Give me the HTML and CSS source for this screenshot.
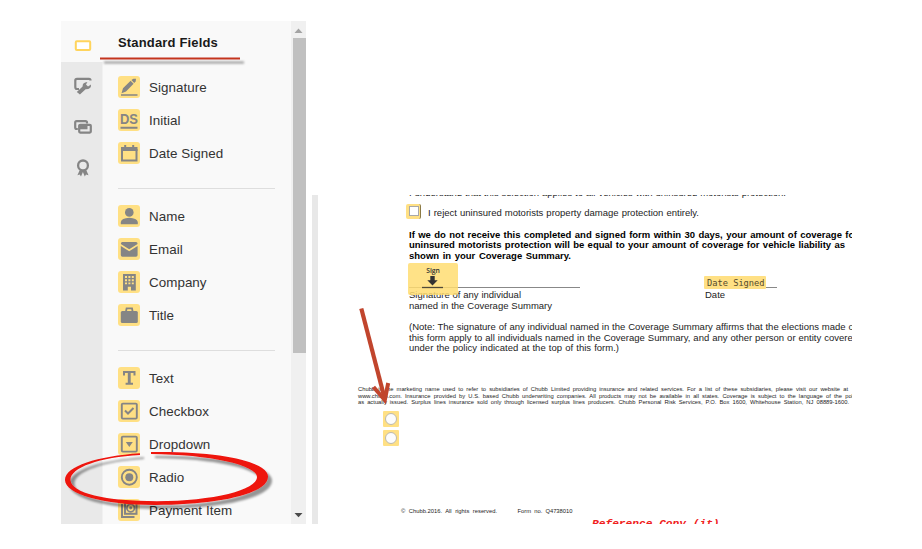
FILE: index.html
```
<!DOCTYPE html>
<html lang="en">
<head>
<meta charset="utf-8">
<title>Standard Fields</title>
<link rel="stylesheet" href="styles.css">
</head>
<body>
<div class="workspace">
  <aside class="palette">
    <nav class="rail">
      <div class="tab active"><svg width="18" height="12" viewBox="0 0 18 12"><rect x="1.8" y="1.3" width="14.4" height="8.7" rx="1" fill="#fff" stroke="#ffd45c" stroke-width="2"/></svg></div>
      <div class="tab"><svg width="18" height="18" viewBox="0 0 18 18"><path d="M5 12H3Q1.3 12 1.3 10V3.4Q1.3 1.8 3 1.8H15Q16.5 1.8 16.5 3.5" fill="none" stroke="#858585" stroke-width="2.2"/><path d="M2.8 15L8.6 9.4Q8.4 5.3 13.4 5L12 7.6L14 9.4L17 7.4Q17.4 12.4 11.6 12.2L5.9 17.6Z" fill="#858585"/></svg></div>
      <div class="tab"><svg width="18" height="14" viewBox="0 0 18 14"><path d="M3.8 9H2.6Q1.2 9 1.2 7.6V2.5Q1.2 1.1 2.6 1.1H11.5Q13 1.1 13 2.5V3.5" fill="none" stroke="#858585" stroke-width="2.2"/><rect x="5.2" y="4.8" width="11.6" height="7.8" rx="1" fill="none" stroke="#858585" stroke-width="2.2"/><path d="M4.7 5.2H13.5V9.3H4.7Z" fill="#858585"/></svg></div>
      <div class="tab"><svg width="14" height="18" viewBox="0 0 14 18"><circle cx="7" cy="6.4" r="4.9" fill="none" stroke="#858585" stroke-width="2.3"/><path d="M4 10.4L1.4 16.2L3.7 15.6L5 17.5L6.9 13L8.8 17.5L10 15.6L12.5 16.2L10 10.4L7 11.6Z" fill="#858585"/></svg></div>
    </nav>
    <div class="fields">
      <h1>Standard Fields</h1>
      <ul>
        <li><svg class="ico" viewBox="0 0 22 22"><path d="M3 19H19.5" stroke="#858585" stroke-width="1.3"/><path d="M3.5 17.2L5 12.2L12.6 4.8L15.6 7.8L8 15.6Z M13.4 4L15.4 2.7L18 2.7L17.7 5.5L16.2 7Z" fill="#858585"/></svg><span>Signature</span></li>
        <li><svg class="ico" viewBox="0 0 22 22"><text x="11" y="15" class="ds" text-anchor="middle" textLength="18" lengthAdjust="spacingAndGlyphs">DS</text><path d="M2.5 18.7H19.5" stroke="#858585" stroke-width="2"/></svg><span>Initial</span></li>
        <li><svg class="ico" viewBox="0 0 22 22"><path d="M4 7V18.5H18.5V7" fill="none" stroke="#858585" stroke-width="2"/><path d="M3 5H19.5V9H3ZM6.2 3H8.2V5H6.2ZM14.2 3H16.2V5H14.2Z" fill="#858585"/></svg><span>Date Signed</span></li>
      </ul>
      <ul>
        <li><svg class="ico" viewBox="0 0 22 22"><circle cx="11.3" cy="7.4" r="4.3" fill="#858585"/><path d="M2.8 19.2V17Q3.5 13.2 11.3 12.8Q19 13.2 19.8 17V19.2Z" fill="#858585"/></svg><span>Name</span></li>
        <li><svg class="ico" viewBox="0 0 22 22"><path d="M4.4 4H18Q19.6 4 19.6 6L11.2 11.2L2.8 6Q2.8 4 4.4 4Z M2.8 8L11.2 13.2L19.6 8V17Q19.6 18.8 18 18.8H4.4Q2.8 18.8 2.8 17Z" fill="#858585"/></svg><span>Email</span></li>
        <li><svg class="ico" viewBox="0 0 22 22"><path d="M5 3H17.8V19.6H13V15.8H9.8V19.6H5Z" fill="#858585"/><path d="M7 6H9M10.4 6H12.4M13.8 6H15.8M7 9.2H9M10.4 9.2H12.4M13.8 9.2H15.8M7 12.4H9M10.4 12.4H12.4M13.8 12.4H15.8" stroke="#ffe084" stroke-width="1.9"/></svg><span>Company</span></li>
        <li><svg class="ico" viewBox="0 0 22 22"><rect x="2.8" y="7" width="17" height="12" rx="1.5" fill="#858585"/><path d="M8 7.5L8.6 4.3H14L14.6 7.5" fill="none" stroke="#858585" stroke-width="1.8"/></svg><span>Title</span></li>
      </ul>
      <ul>
        <li><svg class="ico" viewBox="0 0 22 22"><path d="M5 4H17.5V8.5H15.5V6H12.7V15.8H15V17.8H7.6V15.8H9.8V6H7V8.5H5Z" fill="#858585"/></svg><span>Text</span></li>
        <li><svg class="ico" viewBox="0 0 22 22"><rect x="3.8" y="3.6" width="15" height="15" rx="1" fill="none" stroke="#858585" stroke-width="1.9"/><path d="M7 10.5L10 13.5L15.5 8" fill="none" stroke="#858585" stroke-width="2"/></svg><span>Checkbox</span></li>
        <li><svg class="ico" viewBox="0 0 22 22"><rect x="3.8" y="3.6" width="15" height="15" rx="1" fill="none" stroke="#858585" stroke-width="1.9"/><path d="M7.8 9H14.8L11.3 14Z" fill="#858585"/></svg><span>Dropdown</span></li>
        <li><svg class="ico" viewBox="0 0 22 22"><circle cx="11.3" cy="11.2" r="7.5" fill="none" stroke="#858585" stroke-width="1.9"/><circle cx="11.3" cy="11.2" r="4" fill="#858585"/></svg><span>Radio</span></li>
        <li><svg class="ico" viewBox="0 0 22 22"><path d="M4 5V18H16.5" fill="none" stroke="#858585" stroke-width="2"/><rect x="7" y="3" width="11.5" height="11.8" fill="none" stroke="#858585" stroke-width="2"/><circle cx="12.7" cy="9" r="3.8" fill="none" stroke="#858585" stroke-width="1.8"/><circle cx="12.7" cy="9" r="1.4" fill="#858585"/></svg><span>Payment Item</span></li>
      </ul>
    </div>
    <div class="scrollbar">
      <svg width="9" height="5" viewBox="0 0 9 5"><path d="M0.5 5L4.5 0.5L8.5 5Z" fill="#a3a3a3"/></svg>
      <div class="thumb"></div>
      <svg class="down" width="9" height="5" viewBox="0 0 9 5"><path d="M0.5 0L4.5 4.3L8.5 0Z" fill="#4a4a4a"/></svg>
    </div>
  </aside>
  <main class="document">
    <div class="body-text">
      <p class="line w-understand">I understand that this selection applies to all vehicles with uninsured motorists protection.</p>
      <div class="choice"><span class="box"><i></i></span><p class="line w-reject">I reject uninsured motorists property damage protection entirely.</p></div>
      <div class="strong">
        <p class="line w-b1">If we do not receive this completed and signed form within 30 days, your amount of coverage for</p>
        <p class="line w-b2">uninsured motorists protection will be equal to your amount of coverage for vehicle liability as</p>
        <p class="line w-b3">shown in your Coverage Summary.</p>
      </div>
      <div class="signing">
        <div class="signer">
          <div class="rule"></div>
          <p class="line w-s1">Signature of any individual</p>
          <p class="line w-s2">named in the Coverage Summary</p>
          <div class="sign-tag"><span>Sign</span><svg width="22" height="14" viewBox="0 0 22 14"><path d="M8.3 1H12.7V5.3H15.7L10.5 10.5L5.3 5.3H8.3Z" fill="#333"/><path d="M0 12.5H21" stroke="#504a38" stroke-width="1.3"/></svg></div>
        </div>
        <div class="dater">
          <div class="rule"></div>
          <p class="line w-date">Date</p>
          <div class="date-tag">Date Signed</div>
        </div>
      </div>
      <div class="note">
        <p class="line w-n1">(Note: The signature of any individual named in the Coverage Summary affirms that the elections made on</p>
        <p class="line w-n2">this form apply to all individuals named in the Coverage Summary, and any other person or entity covered</p>
        <p class="line w-n3">under the policy indicated at the top of this form.)</p>
      </div>
    </div>
    <div class="legal">
      <p class="line w-l1">Chubb is the marketing name used to refer to subsidiaries of Chubb Limited providing insurance and related services. For a list of these subsidiaries, please visit our website at</p>
      <p class="line w-l2">www.chubb.com. Insurance provided by U.S. based Chubb underwriting companies. All products may not be available in all states. Coverage is subject to the language of the policy</p>
      <p class="line w-l3">as actually issued. Surplus lines insurance sold only through licensed surplus lines producers. Chubb Personal Risk Services, P.O. Box 1600, Whitehouse Station, NJ 08889-1600.</p>
    </div>
    <div class="radios"><span><i></i></span><span><i></i></span></div>
    <div class="foot"><p class="line w-f1">© Chubb.2016. All rights reserved.</p><p class="line w-f2">Form no. Q4738010</p></div>
    <p class="copy">Reference Copy (it)</p>
  </main>
</div>
<svg class="markup" width="922" height="549" viewBox="0 0 922 549">
  <defs><filter id="shade" x="-10%" y="-30%" width="125%" height="180%"><feDropShadow dx="4" dy="4" stdDeviation="1.2" flood-color="#000" flood-opacity=".4"/></filter>
  <filter id="lineshade" filterUnits="userSpaceOnUse" x="90" y="50" width="170" height="25"><feDropShadow dx="4" dy="4" stdDeviation="1" flood-color="#000" flood-opacity=".4"/></filter></defs>
  <path d="M100 58.5H240" stroke="#c4351f" stroke-width="2.2" filter="url(#lineshade)"/>
  <path filter="url(#shade)" fill="#ee120c" fill-rule="evenodd" d="M140 453.2C98 456 65 466 65 480C65 494 103 505 155 505C218 505 268 494 268 476.5C268 462 222 451 151 452V454C210 454.5 257 465 257 477C257 490 214 501 157 501.2C105 501.2 71 493 70.5 480C70 468 99 457 140 455Z"/>
  <g fill="none" stroke="#c1452d"><path d="M361.3 308.5L384 396" stroke-width="4.2"/><path d="M373.5 387L384.8 400L388.2 383" stroke-width="4"/></g>
</svg>
</body>
</html>
```
FILE: styles.css
```
* { box-sizing: border-box; }
body { margin: 0; width: 922px; height: 549px; overflow: hidden; background: #fff; font-family: "Liberation Sans", Arial, sans-serif; }
p, h1, ul { margin: 0; padding: 0; }
svg { display: block; }
.workspace { display: flex; padding: 21px 0 0 61px; height: 524px; }
.palette { display: flex; width: 245px; height: 503px; overflow: hidden; background: #f9f9f9; }
.rail { width: 42px; background: #e9e9e9; border-right: 1px solid #f1f1f1; }
.tab { height: 41px; display: flex; align-items: center; justify-content: center; padding-left: 2px; padding-top: 7px; }
.tab.active { background: #f9f9f9; padding-top: 8px; margin-right: -1px; }
.fields { width: 188px; padding: 14px 16px 0 15px; }
h1 { font-size: 13px; line-height: 16px; letter-spacing: .16px; color: #1a1a1a; }
ul { list-style: none; }
h1 + ul { padding-top: 20px; }
ul + ul { border-top: 1px solid #dedede; margin-top: 18px; padding-top: 11px; }
li { height: 33px; display: flex; align-items: center; gap: 9px; font-size: 13.4px; letter-spacing: .04px; color: #333; white-space: nowrap; }
.ico { width: 22px; height: 22px; border-radius: 3px; background: #ffe084; flex: none; margin-bottom: 2px; }
.ds { font: bold 15.5px "Liberation Sans", sans-serif; fill: #858585; letter-spacing: 0; }
.scrollbar { width: 15px; background: #f0f0f0; padding-top: 7px; display: flex; flex-direction: column; align-items: center; }
.thumb { width: 13px; height: 315px; background: #c0c0c0; margin-top: 5px; align-self: flex-end; }
.down { margin-top: auto; margin-bottom: 6px; }
.document { width: 540px; height: 329px; margin: 174px 0 0 6px; border-left: 6px solid #e8e8e8; overflow: hidden; color: #1c1c1c; }
.line { white-space: nowrap; text-align: justify; text-align-last: justify; }
.body-text { padding-left: 91px; font-size: 9.5px; line-height: 10.5px; }
.w-understand { width: 377px; margin-top: -7px; }
.choice { display: flex; align-items: center; height: 15px; margin: 5px 0 0 -3px; }
.box { width: 15px; height: 15px; background: #ffe084; border-right: 1px solid #8b7a45; border-radius: 2px; padding: 2px 3px; margin-right: 7px; }
.box i { display: block; width: 10px; height: 10px; border: 1px solid #a8a8a8; background: #fff; }
.choice .line { padding-top: 5px; }
.w-reject { width: 271px; }
.strong { font-weight: bold; margin-top: 11px; color: #000; }
.w-b1 { width: 449px; }
.w-b2 { width: 436px; }
.w-b3 { width: 162px; }
.signing { display: flex; margin-top: 26px; }
.signer { position: relative; width: 296px; }
.rule { height: 1px; width: 171px; background: #888; margin-bottom: 2px; }
.w-s1 { width: 112px; }
.w-s2 { width: 143px; }
.sign-tag { position: absolute; left: -1px; top: -24px; width: 50px; height: 32px; background: rgba(255,220,112,.84); border-radius: 2px; display: flex; flex-direction: column; align-items: center; font: 600 6.8px/8px "Open Sans", sans-serif; color: #333; padding-top: 4px; }
.dater { position: relative; }
.dater .rule { width: 72px; }
.w-date { width: 21px; }
.date-tag { position: absolute; left: -1px; top: -11px; width: 62px; height: 13px; border-radius: 1px; background: #ffe084; font: 8.7px/14px "DejaVu Sans Mono", monospace; color: #554a2c; padding-left: 3px; white-space: nowrap; }
.note { margin-top: 11px; }
.w-n1 { width: 450px; }
.w-n2 { width: 449px; }
.w-n3 { width: 210px; }
.legal { padding-left: 40px; margin-top: 32.5px; font-size: 5.8px; line-height: 6.5px; }
.w-l1 { width: 490px; }
.w-l2 { width: 502px; }
.w-l3 { width: 491px; }
.radios { display: flex; flex-direction: column; gap: 3px; margin: 5px 0 0 65px; }
.radios span { width: 16px; height: 16px; background: #ffe084; padding: 2px; border-radius: 1px; }
.radios i { display: block; width: 12px; height: 12px; border: 1px solid #bdb9ad; border-radius: 50%; background: #fcfcfc; }
.foot { display: flex; gap: 20.5px; margin: 62px 0 0 83px; font-size: 5.8px; line-height: 7px; }
.w-f1 { width: 96px; }
.w-f2 { width: 55px; }
.copy { margin: 3px 0 0 274px; font: bold italic 11.2px/12px "Liberation Mono", monospace; color: #f02020; white-space: nowrap; }
.markup { position: absolute; left: 0; top: 0; pointer-events: none; }
```
